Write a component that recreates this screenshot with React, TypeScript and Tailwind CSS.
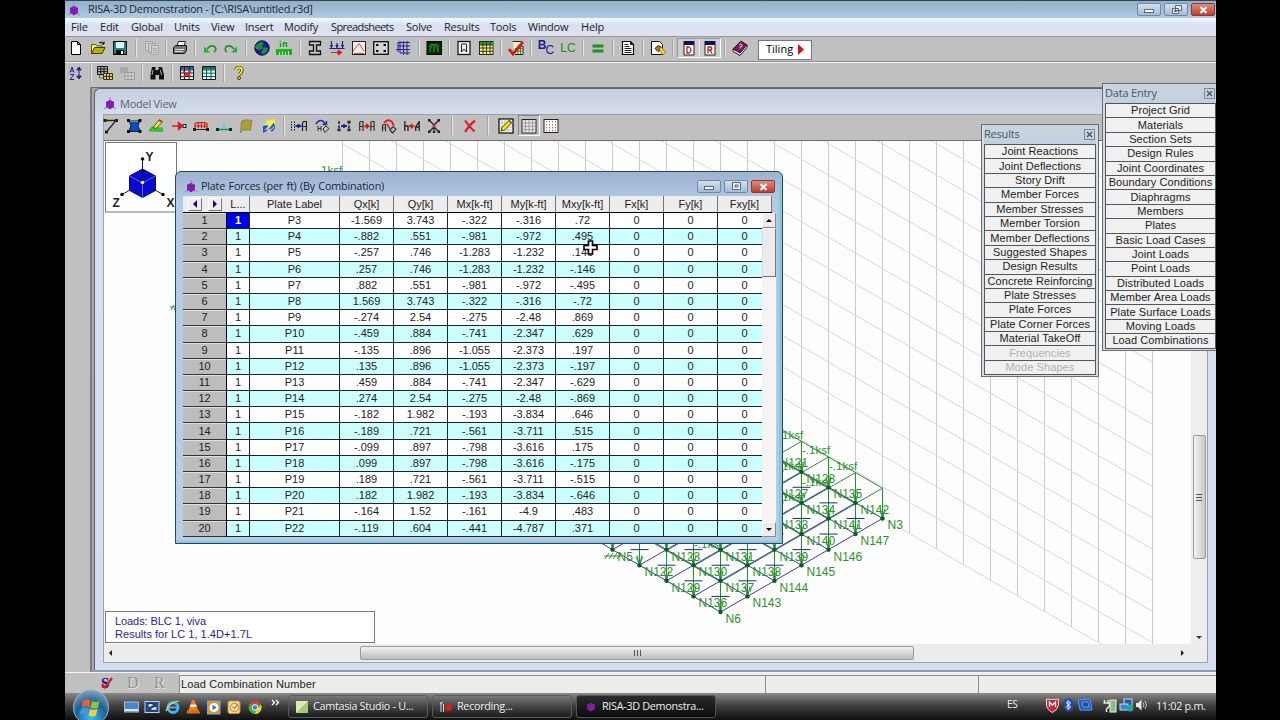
import type { ReactNode } from "react";

const UI = "font-['Open_Sans','Noto_Sans',sans-serif]";
const ARIAL = "font-['Liberation_Sans',Arial,sans-serif]";

/* ---------- icons, all on a 16x16 grid ---------- */

const ICONS: Record<string, ReactNode> = {
  new: <path d="M3.5 1.5h6l3 3v10h-9z M9.5 1.5v3h3" fill="#fff" stroke="#000" />,
  open: (
    <>
      <path d="M1.500 13.500v-9h4l1 1.500h5v2" fill="#ffff80" stroke="#5a5a00" />
      <path d="M1.500 13.500l3-6h10.500l-3 6z" fill="#b8b000" stroke="#3a3a00" />
      <path d="M9 3q3-2.500 5 1m0-2.500v2.500h-2.500" fill="none" stroke="#000" />
    </>
  ),
  save: (
    <>
      <rect x="1.500" y="1.500" width="13" height="13" fill="#118a8a" stroke="#000" />
      <rect x="4" y="2" width="8" height="6" fill="#e8f4f4" />
      <rect x="4" y="10" width="8" height="4.500" fill="#000" />
      <rect x="9" y="11" width="2" height="3" fill="#fff" />
    </>
  ),
  copyOff: (
    <g fill="#cecece" stroke="#a4a4a4">
      <rect x="1.500" y="1.500" width="7" height="9" />
      <rect x="4.500" y="3.500" width="7" height="9" />
      <path d="M7.500 5.500h7v9h-7z M9 8.500h4M9 10.500h4M9 12.500h4" />
    </g>
  ),
  print: (
    <>
      <path d="M5 6l1.500-4.500h7L12 6" fill="#fff" stroke="#222" />
      <path d="M1.500 7.500l2-2h11v5l-2 3h-11z" fill="#777" stroke="#111" />
      <path d="M3 9.500h9M3 11.500h8" stroke="#ddd" />
    </>
  ),
  undo: (
    <>
      <path d="M5 9q4-5 8-2 2 3-1 5" fill="none" stroke="#1f8f2f" strokeWidth="1.600" />
      <path d="M2 6.500v6h6z" fill="#22b040" />
    </>
  ),
  redo: (
    <>
      <path d="M11 9Q7 4 3 7q-2 3 1 5" fill="none" stroke="#1f8f2f" strokeWidth="1.600" />
      <path d="M14 6.500v6H8z" fill="#22b040" />
    </>
  ),
  globe: (
    <>
      <circle cx="8" cy="8" r="7.200" fill="#1a1a9c" stroke="#06064a" />
      <path d="M3 4l5-2.500 2 2.500-2 1 1 3-3 2-4-1-1-2z M10 7l4 1-1 4-4 2.500-2-2z" fill="#1f8a3a" />
    </>
  ),
  units: (
    <>
      <path d="M4.500 3v4M7.500 7V3h3v4M4.500 .8v1" stroke="#11a011" strokeWidth="1.400" fill="none" />
      <path d="M0 9h16v6H0z" fill="#19b219" />
      <path d="M3.500 12v3M6.500 11v4M9.500 12v3M12.500 11v4" stroke="#bfe8bf" />
    </>
  ),
  ibeam: <path d="M2.500 1.500h11v3.500h-4v6h4v3.500h-11v-3.500h4v-6h-4z" fill="#c6c6c6" stroke="#111" strokeWidth="1.300" />,
  load: (
    <>
      <path d="M2.500 1v7M8 3v5M13.500 1v7M.5 8.500h15" stroke="#20208a" strokeWidth="1.200" />
      <path d="M.8 5h3.400l-1.700 3zM6.300 5h3.400L8 8zM11.800 5h3.400l-1.700 3z" fill="#20208a" />
      <path d="M2 12.500h10M9 10l4 2.500L9 15z" stroke="#d02020" fill="#d02020" />
    </>
  ),
  spectra: (
    <>
      <rect x="1.500" y="1.500" width="13" height="13" fill="#f6eeee" stroke="#222" />
      <path d="M2 11L8 3.500l5 7.500M3 13.500h10" fill="none" stroke="#d44" />
    </>
  ),
  diaphragm: (
    <>
      <rect x=".7" y="1.700" width="14.600" height="12.600" fill="#d4d4d4" stroke="#111" strokeWidth="1.300" />
      <path d="M3 4h2.500v2H3zM10.500 4H13v2h-2.500zM3 10h2.500v2H3zM10.500 10H13v2h-2.500z" fill="#111" />
    </>
  ),
  gridBlue: <path d="M5 1v12M8.500 1v14M12 1v14M3 2.500h12M3 6h12M1 9.500h14M5 13h10M3 2v10" stroke="#25259a" fill="none" />,
  dynamics: (
    <>
      <rect x="1" y="1.500" width="14.500" height="13" fill="#062a06" stroke="#000" />
      <path d="M4 12V9l2-3M12 12V9l-2-3M8 12V5M3 7l2-2.500 3 .5 3-.5L13 7" fill="none" stroke="#2fb02f" />
    </>
  ),
  envelope: (
    <>
      <rect x="2" y="1.500" width="12" height="13" fill="#eee" stroke="#111" strokeWidth="1.200" />
      <path d="M5.500 12V4h5v8M5.500 12l2.500-3 2.500 3" fill="none" stroke="#222" />
    </>
  ),
  tableYellow: (
    <>
      <rect x="1.500" y="1.500" width="13.500" height="13" fill="#ffff66" stroke="#222" />
      <rect x="2" y="2" width="13" height="3" fill="#2fa02f" />
      <path d="M5 1.500v13M8.500 1.500v13M12 1.500v13M1.500 5h13M1.500 8h13M1.500 11.300h13" stroke="#333" />
    </>
  ),
  check: (
    <>
      <path d="M4.500 1.500h9v5h1.500v8h-8" fill="#f1f1c0" stroke="#222" />
      <path d="M7 8.500h8M7 11h8M10 7v7M12.500 7v7" stroke="#4a7a20" />
      <path d="M1 9l4 5L15 2" fill="none" stroke="#d81818" strokeWidth="2.800" />
    </>
  ),
  equals: (
    <>
      <path d="M2.500 5.500h11M2.500 10.500h11" stroke="#0c9a0c" strokeWidth="2.200" />
      <path d="M2.500 7h11M2.500 12h11" stroke="#065006" strokeWidth=".8" />
    </>
  ),
  doc: (
    <>
      <path d="M2.500 1.500h8l3 3v10h-11z" fill="#fff" stroke="#000" strokeWidth="1.200" />
      <path d="M4.500 4.500h4M4.500 6.500h5M4.500 8.500h7M4.500 10.500h7M4.500 12.500h7M10.500 2v2.500h3" stroke="#222" />
    </>
  ),
  preview: (
    <>
      <path d="M1.500 1.500h8l3 3v10h-11z" fill="#fff" stroke="#111" />
      <path d="M5 8.500l3-3 3 1.500v3l-3 1.500z" fill="#b8762c" stroke="#222" />
      <path d="M9 9l2.500-2 4 5.500-2.500 2.500z" fill="#f4e020" stroke="#7a4a10" strokeWidth=".7" />
    </>
  ),
  panelD: (
    <>
      <rect x="3" y="1.500" width="10" height="13.500" fill="#fff" stroke="#222" />
      <rect x="3" y="1" width="10" height="4" fill="#101050" />
      <path d="M6 7v6h2q2-1 2-3t-2-3z" fill="none" stroke="#d01818" strokeWidth="1.300" />
    </>
  ),
  panelR: (
    <>
      <rect x="3" y="1.500" width="10" height="13.500" fill="#fff" stroke="#222" />
      <rect x="3" y="1" width="10" height="4" fill="#101050" />
      <path d="M6 13.500V7h3q1.500 1.500 0 3H6m2 0l2.200 3.500" fill="none" stroke="#d01818" strokeWidth="1.300" />
    </>
  ),
  book: (
    <>
      <path d="M1 9l8-8 6 4-7 8z" fill="#7a1a5a" stroke="#3a0a2a" />
      <path d="M1 9l7 4 7-8v2.500L8 15.500l-7-4z" fill="#f0f0f0" stroke="#30102a" />
      <path d="M7 5q2-2 3 0t-2 2v1.500" stroke="#f0c0e0" fill="none" />
    </>
  ),
  sort: (
    <>
      <path d="M2 7.500l2-5.500 2 5.500M2.700 6h2.600M2 9.500h4l-4 5h4" fill="none" stroke="#23238f" />
      <path d="M11 3v10M8.800 5L11 2l2.200 3zM8.800 11l2.200 3 2.200-3z" stroke="#23238f" fill="#23238f" />
    </>
  ),
  gridCopy: (
    <>
      <path d="M.5 1.500h10v8H.5zM.5 4h10M.5 6.700h10M3.800 1.500v8M7 1.500v8" fill="#bbb" stroke="#111" />
      <path d="M6.500 8.500h9v6h-9zM6.500 11.500h9M9.500 8.500v6M12.500 8.500v6" fill="#d8cc50" stroke="#3a3410" />
      <path d="M2.500 10v3h3" fill="none" stroke="#7a6a00" />
    </>
  ),
  gridOff: (
    <>
      <path d="M1 2h8v6H1z" fill="#a8a8a8" />
      <path d="M6 7.500h9.500v7H6zM6 11h9.500M9 7.500v7M12.300 7.500v7" fill="#d6d6d6" stroke="#9a9a9a" />
    </>
  ),
  find: (
    <>
      <path d="M3 2h3.500v3h3V2H13l2 8v4.500h-5V10H6.500v4.500h-5V10z" fill="#111" />
      <path d="M4 5l-1 5M11.500 5l1 5" stroke="#aaa" />
    </>
  ),
  sheetDel: (
    <>
      <path d="M1.500 1.500h13v13h-13z" fill="#e8ffff" stroke="#111" />
      <rect x="2" y="2" width="12.500" height="2.500" fill="#1c6a8a" />
      <path d="M1.500 5h13M1.500 8h13M1.500 11.500h13M5.500 1.500v13M10 1.500v13" stroke="#124" />
      <path d="M4 6.500l8 5.500M12 6.500L4 12" stroke="#e01818" strokeWidth="2" />
    </>
  ),
  sheet: (
    <>
      <path d="M1.500 1.500h13v13h-13z" fill="#e8ffff" stroke="#111" />
      <rect x="2" y="2" width="12.500" height="2.500" fill="#0a7a5a" />
      <path d="M1.500 5h13M1.500 8.200h13M1.500 11.500h13M5.500 1.500v13M10 1.500v13" stroke="#0a5a5a" />
    </>
  ),
  help: (
    <>
      <path d="M5 5Q5 2.500 8 2.500t3 2.500-3 4.500" fill="none" stroke="#333" strokeWidth="3.200" />
      <path d="M5 5Q5 2.500 8 2.500t3 2.500-3 4.500" fill="none" stroke="#ffee10" strokeWidth="1.800" />
      <circle cx="8" cy="13" r="1.500" fill="#ffee10" stroke="#333" />
    </>
  ),
  member: (
    <>
      <path d="M2 2.500h11L3.500 14" fill="none" stroke="#222" strokeWidth="1.300" />
      <path d="M2 3.500h9" stroke="#b0a060" />
      <path d="M.5 1h3v3h-3zM12 1h3v3h-3zM2 12.500h3v3H2z" fill="#222" />
    </>
  ),
  plate: (
    <>
      <path d="M3 2.500h11l-2 5 2 6H3l2-6z" fill="#0a4cc8" stroke="#021" />
      <path d="M1 1h3v3H1zM12.500 1h3v3h-3zM1 12h3v3H1zM12.500 12h3v3h-3z" fill="#111" />
      <path d="M4 3h8" stroke="#d8c860" />
    </>
  ),
  modify: (
    <>
      <path d="M.5 13.500q2-6 6-5t8.500 1v4.500z" fill="#35c035" />
      <path d="M5 9.500L11.500 1.500l3 2.500L8 10.500z" fill="#f0e040" stroke="#5a5a10" />
      <path d="M11 2l3 2" stroke="#d03030" strokeWidth="2" />
    </>
  ),
  jointLoad: (
    <>
      <path d="M1 8h9M7.500 4.500L11.500 8l-4 3.500z" stroke="#e01818" fill="#e01818" strokeWidth="1.400" />
      <rect x="12" y="6.500" width="3" height="3" fill="#d8d8d8" stroke="#222" />
    </>
  ),
  distLoad: (
    <>
      <path d="M2 10V5.500l2-1h8l2 1V10M5.300 5v5M8.500 5v5M11.600 5v5M2 8h12" fill="none" stroke="#e01818" strokeWidth="1.200" />
      <path d="M1 11.500h14" stroke="#222" />
      <path d="M0 10h3v3H0zM13 10h3v3h-3z" fill="#222" />
    </>
  ),
  pointLoad: (
    <>
      <path d="M1 11.500h14" stroke="#128a8a" strokeWidth="1.500" />
      <path d="M8 4v6M6 7.500l2 2.500 2-2.500" stroke="#60c8d0" fill="none" />
      <path d="M0 10h3v3H0zM13 10h3v3h-3z" fill="#222" />
    </>
  ),
  area: <path d="M3.500 3q4-2 10.500-.500L12.500 12H5l-2.500 3z" fill="#a8a030" stroke="#8a8660" />,
  surface: (
    <>
      <path d="M5 3l8-2 2 4-5 3-6 1z" fill="#f4ec40" />
      <path d="M2 8l5-1-1 6-4 2zM13 4l1 6-3 4-3-3z" fill="#2858c8" />
      <path d="M4 12l9-8M8 13l5-4" stroke="#fff480" />
    </>
  ),
  copyA: (
    <>
      <path d="M.5 3.500v9M3.500 3.500v9" stroke="#222" strokeDasharray="1.500 1" />
      <path d="M4.500 8h6M7.500 6v4" stroke="#2424a0" strokeWidth="1.800" />
      <path d="M11.500 13V5l1-1.500h3V13M11.500 8.500h4" fill="none" stroke="#222" strokeWidth="1.200" />
    </>
  ),
  rotate: (
    <>
      <path d="M2 6q3-5 7-3l3 4M8.500 6.500h4V3" fill="none" stroke="#2a2a9a" strokeWidth="1.500" />
      <path d="M4 8v5M7 8v5M4 10.500h3M9 11l3-3 3 2.500-4 4z" stroke="#333" fill="none" />
    </>
  ),
  mirror: (
    <>
      <path d="M3 3v10M13 3v10" stroke="#222" strokeWidth="1.500" strokeDasharray="3 1.500" />
      <path d="M5 8h6M8 6v4" stroke="#2424a0" strokeWidth="1.800" />
      <path d="M1.500 12h3M11.500 12h3M11.500 4h3" stroke="#222" strokeWidth="2.500" />
    </>
  ),
  moveA: (
    <>
      <path d="M.7 13V4.500l.8-1h2.500V13M.7 8.500H4M11.800 13V4.500l.8-1h2.500V13M11.800 8.500h3.300" fill="none" stroke="#333" strokeWidth="1.200" />
      <path d="M5.200 8.200h5.400M8 5.800v4.800" stroke="#e01818" strokeWidth="2" />
    </>
  ),
  rotateRed: (
    <>
      <path d="M3 5q4-5 8-1l2 3.500" fill="none" stroke="#e01818" strokeWidth="1.800" />
      <path d="M1.500 13.500V7.500l1-1h2v7M1.500 10h3M9 12l3-3.500 3 2.500-3.500 4z" stroke="#333" fill="none" strokeWidth="1.200" />
      <path d="M6 6l3 5" stroke="#e01818" strokeWidth="1.500" />
    </>
  ),
  scaleA: (
    <>
      <path d="M.8 3v10M.8 8H4v5M15.200 3v10M15.200 9h-3.500M11.700 13V9l3.500-5.500" fill="none" stroke="#222" strokeWidth="1.300" />
      <path d="M5 8.200h5.400M7.700 5.800v4.800" stroke="#e01818" strokeWidth="2" />
    </>
  ),
  merge: (
    <>
      <path d="M3 2l5 5 5-5M3 14l5-5 5 5M8 7v6" fill="none" stroke="#222" strokeWidth="1.300" />
      <path d="M6.500 6.500h3v3h-3z" fill="#d03a3a" />
      <path d="M2 1h2.500v2.500H2zM11.500 1H14v2.500h-2.500zM2 12.500h2.500V15H2zM11.500 12.500H14V15h-2.500zM6.800 13h2.500v2H6.800z" fill="#222" />
    </>
  ),
  del: <path d="M3 2.500q4 6 9.500 11M13 2.500Q7 7 3 14" fill="none" stroke="#e01c2c" strokeWidth="2.200" />,
  edit: (
    <>
      <rect x="1" y="1" width="14" height="14" fill="#f4f4ea" stroke="#111" strokeWidth="1.300" />
      <path d="M4 1v14M7 1v14M10 1v14M1 5h14M1 9h14M1 12h14" stroke="#aaa" strokeWidth=".6" />
      <path d="M3 13l1-3.500L11 2.500l2.500 2.500L6.500 12z" fill="#f4e81c" stroke="#4a4000" />
      <path d="M11 2.500l2.500 2.500" stroke="#b03020" strokeWidth="1.500" />
    </>
  ),
  grid: (
    <>
      <rect x="1" y="1.500" width="14" height="13.500" fill="#e8e8e8" stroke="#222" />
      <path d="M4.500 2v13M8 2v13M11.500 2v13M1 5h14M1 8.300h14M1 11.600h14" stroke="#9a9a9a" />
    </>
  ),
  dots: (
    <>
      <rect x="1" y="1.500" width="14" height="13" fill="#fff" stroke="#222" />
      <path d="M3.500 3v11M6.500 3v11M9.500 3v11M12.500 3v11" stroke="#d05050" strokeDasharray="1.300 1.700" />
    </>
  ),
};

function Icon({ name, className = "w-[22px]" }: { name: string; className?: string }) {
  return (
    <span className={`flex h-full shrink-0 items-center justify-center ${className}`}>
      <svg width="16" height="16" viewBox="0 0 16 16">
        {ICONS[name]}
      </svg>
    </span>
  );
}

function Sep({ className = "w-2" }: { className?: string }) {
  return (
    <span className={`flex h-full shrink-0 justify-center py-px ${className}`}>
      <span className="w-px bg-[#a4a4a4]" />
      <span className="w-px bg-[#e6e6e6]" />
    </span>
  );
}

function RisaLogo() {
  return (
    <svg width="14" height="14" viewBox="0 0 14 14" className="shrink-0">
      <path d="M7 0v3M1 12l3-2M13 12l-3-2" stroke="#7ca0b0" strokeWidth="1.200" />
      <path d="M7 2.800l4 2.200v5l-4 2.200L3 10V5z" fill="#8e1cb8" />
      <path d="M3 5l4 2 4-2M7 7v5" stroke="#7a1aa4" fill="none" />
    </svg>
  );
}

function WindowButtons({ restore }: { restore?: boolean }) {
  const box = "flex h-[13px] w-[24px] items-center justify-center rounded-[2px] border";
  return (
    <div className="flex gap-[3px]">
      <span className={`${box} border-[#7288a6] bg-linear-to-b from-[#d4e1ef] to-[#a4bbd4]`}>
        <span className="mt-[3px] h-[4px] w-[10px] border border-[#5c6674] bg-white" />
      </span>
      <span className={`${box} border-[#7288a6] bg-linear-to-b from-[#d4e1ef] to-[#a4bbd4]`}>
        <svg width="11" height="9" viewBox="0 0 11 9">
          {restore ? (
            <path d="M4.500.5h6v5h-6zM1.500 3.500h6v5h-6zM3.500 5.500h2v1h-2z" fill="#e8eef4" stroke="#5c6674" />
          ) : (
            <path d="M1.500.5h8v7h-8zM4 3h3v2H4z" fill="#f0f4f8" stroke="#5c6674" />
          )}
        </svg>
      </span>
      <span className={`${box} border-[#8a3a34] bg-linear-to-b from-[#dd8a80] to-[#c23a2c]`}>
        <svg width="9" height="8" viewBox="0 0 9 8">
          <path d="M1.500 1l6 6M7.500 1l-6 6" stroke="#fff" strokeWidth="2" />
        </svg>
      </span>
    </div>
  );
}

/* ---------- menus and toolbars ---------- */

const MENUS = [
  ["File", "w-[29px]"],
  ["Edit", "w-[31px]"],
  ["Global", "w-[43px]"],
  ["Units", "w-[37px]"],
  ["View", "w-[34px]"],
  ["Insert", "w-[39px]"],
  ["Modify", "w-[47px]"],
  ["Spreadsheets", "w-[75px] tracking-[-0.6px]"],
  ["Solve", "w-[38px]"],
  ["Results", "w-[46px]"],
  ["Tools", "w-[38px]"],
  ["Window", "w-[53px]"],
  ["Help", "w-[40px]"],
];

function MainToolbar() {
  return (
    <div className="flex h-[25px] items-center border-b border-[#8e8e8e] bg-[#c0c0c0] pt-px pb-[3px]">
      <Icon name="new" />
      <Icon name="open" />
      <Icon name="save" />
      <Sep className="w-[10px]" />
      <Icon name="copyOff" />
      <Sep className="w-[6px]" />
      <Icon name="print" />
      <Sep />
      <Icon name="undo" />
      <Icon name="redo" className="w-[20px]" />
      <Sep className="w-[10px]" />
      <Icon name="globe" />
      <Icon name="units" />
      <Sep className="w-[9px]" />
      <Icon name="ibeam" />
      <Icon name="load" />
      <Icon name="spectra" />
      <Icon name="diaphragm" />
      <Icon name="gridBlue" />
      <Sep className="w-[9px]" />
      <Icon name="dynamics" />
      <Sep />
      <Icon name="envelope" />
      <Icon name="tableYellow" />
      <Sep />
      <Icon name="check" />
      <Sep />
      <span className={`flex w-[22px] justify-center text-[12px] leading-none text-[#1c1c90] ${ARIAL}`}>
        <b className="-mt-[2px]">B</b>
        <span className="mt-[3px] -ml-px">C</span>
      </span>
      <span className={`w-[22px] text-center text-[12px] leading-none text-[#1a8a2a] ${ARIAL}`}>LC</span>
      <Sep />
      <Icon name="equals" />
      <Sep />
      <Icon name="doc" />
      <Sep />
      <Icon name="preview" />
      <Sep />
      <span className="flex h-[20px] shrink-0 border border-t-[#999] border-r-white border-b-white border-l-[#999] bg-[#cdcdcd]">
        <Icon name="panelD" className="w-[21px]" />
        <Icon name="panelR" className="w-[21px] border-l border-[#e8e8e8]" />
      </span>
      <Sep />
      <Icon name="book" />
      <span className={`mt-[3px] ml-[7px] flex h-5 w-[54px] items-center gap-[5px] border border-[#777] bg-white pl-[7px] text-[11px] text-black ${UI}`}>
        Tiling
        <svg width="6" height="11" viewBox="0 0 6 11">
          <path d="M0 0l6 5.500L0 11z" fill="#d8101c" />
        </svg>
      </span>
    </div>
  );
}

function SheetToolbar() {
  return (
    <div className="flex h-[25px] items-center border-t border-[#f4f4f4] bg-[#c0c0c0] pb-[4px]">
      <Icon name="sort" />
      <Sep className="w-[7px]" />
      <Icon name="gridCopy" />
      <Icon name="gridOff" />
      <Sep />
      <Icon name="find" />
      <Sep />
      <Icon name="sheetDel" />
      <Icon name="sheet" />
      <Sep />
      <Icon name="help" />
    </div>
  );
}

const MODEL_TOOLS_A = ["member", "plate", "modify", "jointLoad", "distLoad", "pointLoad", "area", "surface"];
const MODEL_TOOLS_B = ["copyA", "rotate", "mirror", "moveA", "rotateRed", "scaleA", "merge"];

function ModelToolbar() {
  return (
    <div className="-ml-[4px] flex h-[25px] shrink-0 items-center pb-[4px]">
      {MODEL_TOOLS_A.map((n) => (
        <Icon key={n} name={n} className="w-[22.5px]" />
      ))}
      <Sep />
      {MODEL_TOOLS_B.map((n) => (
        <Icon key={n} name={n} className="w-[22.5px]" />
      ))}
      <Sep className="w-[13px]" />
      <Icon name="del" className="w-[23px]" />
      <Sep className="w-[13px]" />
      <Icon name="edit" className="w-[23px]" />
      <Icon name="grid" className="w-[22px] border border-t-[#888] border-r-white border-b-white border-l-[#888]" />
      <Icon name="dots" />
    </div>
  );
}

/* ---------- model drawing ---------- */

const DX = 27;
const DY = 15.59;
const LOAD = 30.3;

// Isometric node position; i runs toward the right corner, j toward the left one.
const node = (i: number, j: number) => ({ x: 720.5 + (i - j) * DX, y: 612 - (i + j) * DY });

function nodeLabel(i: number, j: number) {
  if (i === 0 && j === 0) return "N6";
  if (i === 6 && j === 0) return "N3";
  if (i === 0 && j === 4) return "N5";
  if (j === 0) return `N${142 + i}`;
  return `N${136 - (j - 1) * 7 + i}`;
}

function GridPlane() {
  const xs = Array.from({ length: 31 }, (_, k) => 342.5 + k * DX);
  const floor = (x: number) => 533.5 + (x - 909.5) * 0.5774;
  const lines = Array.from({ length: 34 }, (_, k) => k);
  return (
    <g stroke="#d9d9d9" fill="none">
      {xs.map((x) => (
        <line key={x} x1={x} x2={x} y1={130} y2={floor(x)} stroke="#cacace" />
      ))}
      {lines.map((k) => (
        <line key={k} x1={342.5} x2={1152.5} y1={floor(342.5) - k * 31.17} y2={floor(1152.5) - k * 31.17} />
      ))}
    </g>
  );
}

function Slab() {
  const cells: { i: number; j: number }[] = [];
  for (let j = 0; j <= 7; j++) for (let i = 0; i <= 6; i++) cells.push({ i, j });
  // The spreadsheet window covers everything up and left of these bounds.
  const labelled = cells.filter(({ i, j }) => node(i, j).x > 755 || node(i, j).y > 548);
  const loaded = cells.filter(({ i, j }) => i > 0 && j > 1 && (node(i, j).x > 770 || node(i, j).y > 563));
  return (
    <g>
      {cells.map(({ i, j }) => {
        const p = node(i, j);
        return (
          <g key={`b${i}-${j}`} fill="none" strokeWidth="1">
            {i < 6 && <line x1={p.x} y1={p.y} x2={p.x + DX} y2={p.y - DY} stroke="#3c3ca0" />}
            <line x1={p.x} y1={p.y} x2={p.x - DX} y2={p.y - DY} stroke="#3c3ca0" />
            {i < 6 && <line x1={p.x} y1={p.y - LOAD} x2={p.x + DX} y2={p.y - LOAD - DY} stroke="#2f8a3c" />}
            <line x1={p.x} y1={p.y - LOAD} x2={p.x - DX} y2={p.y - LOAD - DY} stroke="#2f8a3c" />
            <line x1={p.x} y1={p.y} x2={p.x} y2={p.y - LOAD} stroke="#179a1c" />
            <path d={`M${p.x - 2.5} ${p.y - 10}L${p.x} ${p.y}L${p.x + 2.5} ${p.y - 10}`} stroke="#2f8a3c" />
            {i < 6 && <line x1={p.x - 9} y1={p.y - DY} x2={p.x + 9} y2={p.y - DY} stroke="#24248c" />}
            <circle cx={p.x} cy={p.y} r="2.2" fill="#0c5a24" />
          </g>
        );
      })}
      <g fill="#2b922b" className={ARIAL}>
        {labelled.map(({ i, j }) => (
          <text key={`n${i}-${j}`} x={node(i, j).x + 5} y={node(i, j).y + 11} fontSize="12">
            {nodeLabel(i, j)}
          </text>
        ))}
        {loaded.map(({ i, j }) => (
          <text key={`l${i}-${j}`} x={node(i, j).x + 0.5} y={node(i, j).y - LOAD + 13} fontSize="11.500">
            -.1ksf
          </text>
        ))}
      </g>
      <path d="M604 556h17M605 559l4-6M609 559l4-6M613 559l4-6M617 559l4-6M636 557l3 6M643 557l-3 6" stroke="#2b922b" />
    </g>
  );
}

function AxisCube() {
  return (
    <g>
      <rect x="105.500" y="142.500" width="71" height="69.500" fill="#fff" stroke="#777" />
      <path d="M142.500 183V159M142.500 183l-20.500 11.500M142.500 183l20.500 11.500" stroke="#222" />
      <path d="M142.500 169l13 7v14.500l-13 7-13-7V176z" fill="#0a0acc" stroke="#060680" />
      <path d="M129.500 176l13 7 13-7M142.500 183v14.500" stroke="#5a6ae8" fill="none" />
      <path d="M142.500 182v-23" stroke="#111" />
      <circle cx="142.500" cy="182.500" r="1.800" fill="#ffee20" />
      <circle cx="142.500" cy="159" r="1.800" fill="#111" />
      <circle cx="122" cy="194.500" r="1.800" fill="#111" />
      <circle cx="163" cy="194.500" r="1.800" fill="#111" />
      <g className={ARIAL} fontSize="12" fontWeight="bold" fill="#222">
        <text x="145.500" y="161">Y</text>
        <text x="112.500" y="207">Z</text>
        <text x="166.500" y="207">X</text>
      </g>
    </g>
  );
}

function ModelCanvas() {
  return (
    <svg width="1087" height="503" viewBox="104 141 1087 503" className="shrink-0 bg-[#fdfdfd]">
      <GridPlane />
      <Slab />
      <g fill="#2b922b" fontSize="11.500" className={ARIAL}>
        <text x="314" y="174">-.1ksf</text>
        <path d="M170 307h8M171 310l3-5M174 310l3-5" stroke="#2b922b" />
      </g>
      <AxisCube />
      <rect x="105.500" y="611.500" width="269" height="31" fill="#fff" stroke="#777" />
      <g fill="#26268c" fontSize="11" className={ARIAL}>
        <text x="115" y="625" textLength="91">Loads: BLC 1, viva</text>
        <text x="115" y="638" textLength="137">Results for LC 1, 1.4D+1.7L</text>
      </g>
    </svg>
  );
}

function ModelWindow() {
  return (
    <div className="ml-[2px] flex flex-1 flex-col rounded-tl-[6px] border-t border-l border-[#5a6272] bg-linear-to-b from-[#c6cde0] via-[#d6e0ee] via-[5%] to-[#d5def0]">
      <div className={`flex h-[25px] shrink-0 items-center gap-[3px] pt-[5px] pl-[8px] text-[11px] tracking-[-0.25px] text-[#5c646e] ${UI}`}>
        <RisaLogo />
        <span>Model View</span>
      </div>
      <div className="mr-[8px] ml-[8px] flex h-[549px] flex-col border border-[#9aa2ae] bg-[#c0c0c0]">
        <ModelToolbar />
        <div className="flex border-t border-[#6e6e6e]">
          <ModelCanvas />
          <div className="flex flex-1 flex-col items-center bg-[#eeeeee]">
            <div className="mt-[294px] flex h-[124px] w-[13px] flex-col items-center justify-center gap-[2px] rounded-[2px] border border-[#9a9a9a] bg-linear-to-r from-[#f4f4f4] to-[#c8c8c8]">
              <span className="h-px w-[6px] bg-[#555]" />
              <span className="h-px w-[6px] bg-[#555]" />
              <span className="h-px w-[6px] bg-[#555]" />
            </div>
            <span className="mt-[77px] border-x-[3px] border-t-[3px] border-x-transparent border-t-[#333]" />
          </div>
        </div>
        <div className="flex h-[18px] items-center bg-[#ececec]">
          <span className="ml-[5px] border-y-[3px] border-r-[3px] border-y-transparent border-r-[#222]" />
          <div className="ml-[248px] flex h-[14px] w-[554px] items-center justify-center gap-[2px] rounded-[2px] border border-[#9a9a9a] bg-linear-to-b from-[#f0f0f0] to-[#bdbdbd]">
            <span className="h-[6px] w-px bg-[#555]" />
            <span className="h-[6px] w-px bg-[#555]" />
            <span className="h-[6px] w-px bg-[#555]" />
          </div>
          <span className="ml-[267px] border-y-[3px] border-l-[3px] border-y-transparent border-l-[#222]" />
        </div>
      </div>
    </div>
  );
}

/* ---------- plate forces spreadsheet ---------- */

const COLUMNS = ["L...", "Plate Label", "Qx[k]", "Qy[k]", "Mx[k-ft]", "My[k-ft]", "Mxy[k-ft]", "Fx[k]", "Fy[k]", "Fxy[k]"];

const ROWS = [
  ["P3", "-1.569", "3.743", "-.322", "-.316", ".72"],
  ["P4", "-.882", ".551", "-.981", "-.972", ".495"],
  ["P5", "-.257", ".746", "-1.283", "-1.232", ".146"],
  ["P6", ".257", ".746", "-1.283", "-1.232", "-.146"],
  ["P7", ".882", ".551", "-.981", "-.972", "-.495"],
  ["P8", "1.569", "3.743", "-.322", "-.316", "-.72"],
  ["P9", "-.274", "2.54", "-.275", "-2.48", ".869"],
  ["P10", "-.459", ".884", "-.741", "-2.347", ".629"],
  ["P11", "-.135", ".896", "-1.055", "-2.373", ".197"],
  ["P12", ".135", ".896", "-1.055", "-2.373", "-.197"],
  ["P13", ".459", ".884", "-.741", "-2.347", "-.629"],
  ["P14", ".274", "2.54", "-.275", "-2.48", "-.869"],
  ["P15", "-.182", "1.982", "-.193", "-3.834", ".646"],
  ["P16", "-.189", ".721", "-.561", "-3.711", ".515"],
  ["P17", "-.099", ".897", "-.798", "-3.616", ".175"],
  ["P18", ".099", ".897", "-.798", "-3.616", "-.175"],
  ["P19", ".189", ".721", "-.561", "-3.711", "-.515"],
  ["P20", ".182", "1.982", "-.193", "-3.834", "-.646"],
  ["P21", "-.164", "1.52", "-.161", "-4.9", ".483"],
  ["P22", "-.119", ".604", "-.441", "-4.787", ".371"],
];

function ScrollArrow({ up }: { up?: boolean }) {
  return (
    <span className="flex h-[15px] w-full items-center justify-center border border-t-white border-r-[#888] border-b-[#888] border-l-white bg-[#ececec]">
      <span
        className={
          up
            ? "border-x-[3px] border-b-[3px] border-x-transparent border-b-black"
            : "border-x-[3px] border-t-[3px] border-x-transparent border-t-black"
        }
      />
    </span>
  );
}

function PlateForces() {
  return (
    <div className="absolute top-[171px] left-[175px] flex h-[373px] w-[608px] flex-col rounded-t-[6px] border border-[#1d4a64] bg-linear-to-b from-[#9fb2cf] via-[#b2cbe6] via-[8%] to-[#b4cfe6] shadow-[inset_-3px_-2px_2px_#8cc4dc]">
      <div className="flex h-[24px] shrink-0 items-center justify-between pt-[5px] pr-[7px] pl-[8px]">
        <div className={`flex items-center gap-[3px] text-[10.800px] text-[#1c2430] ${UI}`}>
          <RisaLogo />
          <span className="tracking-[-0.2px] [word-spacing:0.8px]">Plate Forces (per ft) (By Combination)</span>
        </div>
        <WindowButtons />
      </div>
      <div className={`ml-[7px] w-[593px] text-[11px] leading-none text-[#222] ${ARIAL}`}>
        <div className="grid h-[17px] w-[589px] grid-cols-[44px_23px_90px_repeat(7,54px)_54px] border-b border-black bg-[#ededed]">
          <div className="flex items-center gap-[6px] pl-[5px]">
            <span className="flex h-[13px] w-[14px] items-center justify-center border border-t-white border-r-[#777] border-b-[#777] border-l-white">
              <span className="border-y-[4px] border-r-[4px] border-y-transparent border-r-[#10107c]" />
            </span>
            <span className="flex h-[13px] w-[14px] items-center justify-center border border-t-white border-r-[#777] border-b-[#777] border-l-white">
              <span className="border-y-[4px] border-l-[4px] border-y-transparent border-l-[#10107c]" />
            </span>
          </div>
          {COLUMNS.map((c) => (
            <div key={c} className="flex items-center justify-center border-r border-[#777]">
              {c}
            </div>
          ))}
        </div>
        <div className="flex">
          <div className="w-[579px]">
            {ROWS.map((row, n) => (
              <div
                key={row[0]}
                className={`grid h-[16.2px] grid-cols-[44px_23px_90px_repeat(7,54px)_54px] overflow-hidden ${n % 2 ? "bg-[#ccffff]" : "bg-white"}`}
              >
                <div className="flex items-center justify-center border-r border-b border-r-black border-b-[#333] bg-[#bdbdbd] shadow-[inset_0_1px_0_#e0e0e0]">
                  {n + 1}
                </div>
                <div
                  className={`flex items-center justify-center border-r border-b border-[#222] ${n === 0 ? "bg-[#0000f0] font-bold text-white" : ""}`}
                >
                  1
                </div>
                {[...row, "0", "0", "0"].map((v, k) => (
                  <div key={k} className="flex items-center justify-center border-r border-b border-[#222]">
                    {v}
                  </div>
                ))}
              </div>
            ))}
          </div>
          <div className="flex w-[14px] flex-col justify-between bg-[#f4f4f4]">
            <div>
              <ScrollArrow up />
              <div className="h-[49px] border border-t-white border-r-[#777] border-b-[#777] border-l-[#ddd] bg-[#ebebeb]" />
            </div>
            <ScrollArrow />
          </div>
        </div>
      </div>
    </div>
  );
}

/* ---------- floating button lists ---------- */

const RESULTS = [
  "Joint Reactions",
  "Joint Deflections",
  "Story Drift",
  "Member Forces",
  "Member Stresses",
  "Member Torsion",
  "Member Deflections",
  "Suggested Shapes",
  "Design Results",
  "Concrete Reinforcing",
  "Plate Stresses",
  "Plate Forces",
  "Plate Corner Forces",
  "Material TakeOff",
  "Frequencies",
  "Mode Shapes",
];

const DATA_ENTRY = [
  "Project Grid",
  "Materials",
  "Section Sets",
  "Design Rules",
  "Joint Coordinates",
  "Boundary Conditions",
  "Diaphragms",
  "Members",
  "Plates",
  "Basic Load Cases",
  "Joint Loads",
  "Point Loads",
  "Distributed Loads",
  "Member Area Loads",
  "Plate Surface Loads",
  "Moving Loads",
  "Load Combinations",
];

function Palette({ title, items, disabled = [], className }: { title: string; items: string[]; disabled?: string[]; className: string }) {
  return (
    <div className={`absolute flex flex-col border border-[#666d75] bg-[#d3dce6] px-[2px] pb-[2px] ${className}`}>
      <div className={`flex h-[19px] shrink-0 items-center justify-between bg-linear-to-b from-[#cbd4dc] to-[#bfd0e0] pr-px text-[11px] tracking-[-0.2px] text-[#4c5864] ${UI}`}>
        {title}
        <span className="flex size-[11px] items-center justify-center border border-[#7c8a9a]">
          <svg width="7" height="7" viewBox="0 0 7 7">
            <path d="M1 1l5 5M6 1L1 6" stroke="#46505c" strokeWidth="1.300" />
          </svg>
        </span>
      </div>
      <div className={`border-x border-t border-[#555] text-[11px] tracking-[0.08px] text-[#1c1c1c] ${ARIAL}`}>
        {items.map((t) => (
          <div
            key={t}
            className={`flex h-[14.4px] items-center justify-center border-b border-[#555] bg-[#f0f0f0] leading-none whitespace-nowrap ${disabled.includes(t) ? "text-[#b0b0b0]" : ""}`}
          >
            {t}
          </div>
        ))}
      </div>
    </div>
  );
}

/* ---------- status bar and taskbar ---------- */

function StatusBar() {
  return (
    <div className={`flex h-[21px] items-stretch border-t border-[#f4f4f4] bg-[#ededeb] text-[11px] text-[#222] ${ARIAL}`}>
      <div className="flex w-[114px] items-center bg-[#c0c0c0] pl-[34px] font-['Liberation_Serif',serif] text-[16px] leading-none">
        <span className="relative w-[28px] pl-[2px] text-[15px] font-bold text-[#1414a0]">
          S
          <svg width="13" height="13" viewBox="0 0 13 13" className="absolute top-px left-[2px]">
            <path d="M1 7l3 3.500L11 1" fill="none" stroke="#e01818" strokeWidth="2.200" />
          </svg>
        </span>
        <span className="w-[27px] text-[#949494] [text-shadow:1px_1px_0_#e8e8e8]">D</span>
        <span className="text-[#949494] [text-shadow:1px_1px_0_#e8e8e8]">R</span>
      </div>
      <div className="mt-[2px] flex w-[586px] items-center border-t border-l border-[#8c8c8c] pl-px tracking-[0.15px]">
        Load Combination Number
      </div>
      <div className="mt-[2px] w-[213px] border-t border-l border-[#8c8c8c]" />
      <div className="mt-[2px] flex-1 border-t border-l border-[#8c8c8c]" />
    </div>
  );
}

function QuickLaunch() {
  return (
    <svg width="162" height="20" viewBox="0 0 162 20" className="shrink-0">
      <rect x="1.500" y="5" width="14" height="10" fill="#4a86cc" stroke="#a8bccc" />
      <path d="M2 13h13" stroke="#dde8f0" strokeWidth="2" />
      <rect x="22" y="4.500" width="14" height="11" fill="#1c4a88" stroke="#c0d0e0" />
      <path d="M25 6.500h5v4h-5zM28 9.500h6v4h-6z" fill="#c8dcf4" stroke="#1c3a68" />
      <circle cx="50" cy="10.500" r="5" fill="none" stroke="#4ab0f0" strokeWidth="3" />
      <path d="M46 10.500h9" stroke="#4ab0f0" strokeWidth="2" />
      <path d="M43 14q3-9 13-10" fill="none" stroke="#f0d050" strokeWidth="1.200" />
      <path d="M69 3h2.500l3.500 10h-9.500z" fill="#f08020" />
      <path d="M67.500 7.500h5.500l.8 2.500h-7z" fill="#f8f0e8" />
      <path d="M64.500 13h11.500l1 3.500h-13.500z" fill="#e06c10" />
      <rect x="84.500" y="4" width="12.500" height="13" fill="#f08c20" stroke="#58b8e8" />
      <circle cx="91" cy="10.500" r="4.500" fill="#fff" />
      <path d="M89.500 8l4 2.500-4 2.500z" fill="#1c6ab8" />
      <rect x="105" y="4" width="12" height="12.500" rx="2" fill="#f4d8a0" stroke="#c8923c" />
      <circle cx="111.500" cy="10.500" r="4" fill="#fff8e8" stroke="#d8982c" strokeWidth="1.500" />
      <path d="M109.500 9.500l2 2 3-4" fill="none" stroke="#c87c1c" strokeWidth="1.300" />
      <circle cx="132" cy="10.500" r="6.500" fill="#3cae48" />
      <path d="M126.200 7.500a6.500 6.500 0 0 1 11.600 0h-5.800z" fill="#e03c30" />
      <path d="M138 8a6.500 6.500 0 0 1-6.500 9l3.500-6z" fill="#f4cc28" />
      <circle cx="132" cy="10.500" r="2.800" fill="#3c80e0" stroke="#fff" />
      <path d="M149 3l2.500 2.500L149 8M153 3l2.500 2.500L153 8" fill="none" stroke="#fff" strokeWidth="1.300" />
    </svg>
  );
}

function StartOrb() {
  return (
    <svg width="38" height="31" viewBox="0 0 38 31" className="-mt-[4px] ml-[7px] shrink-0 self-start">
      <defs>
        <radialGradient id="orb" cx="50%" cy="80%" r="75%">
          <stop offset="0" stopColor="#3cc0f0" />
          <stop offset=".6" stopColor="#1c5f94" />
          <stop offset="1" stopColor="#7c9cb4" />
        </radialGradient>
      </defs>
      <circle cx="19" cy="18.500" r="17.500" fill="url(#orb)" stroke="#9cb4c4" />
      <path d="M11 12q4-2.500 7.500-.5L17 18q-3.500-1.500-7.500.500z" fill="#e8602c" />
      <path d="M20 12q4 2 7.500 0L26 18.500q-3.500 2-7.500-.300z" fill="#8cc43c" />
      <path d="M9 20q4-2.500 7.500-.5L15 25.500q-3.500-1.500-7.500.500z" fill="#3c98e0" />
      <path d="M18 20q4 2 7.500 0L24 26.500q-3.500 2-7.500-.300z" fill="#f8cc3c" />
    </svg>
  );
}

function Tray() {
  return (
    <svg width="102" height="18" viewBox="0 0 102 18" className="-mt-[4px] shrink-0">
      <path d="M.5 3q6 1 12 0v6q-1 5-6 7.500Q1 14 .5 9z" fill="#c8283c" stroke="#f0d8dc" />
      <path d="M3.500 11V6l3 3 3-3v5" fill="none" stroke="#fff" strokeWidth="1.300" />
      <rect x="18" y="2.500" width="9" height="13" rx="4.500" fill="#1c4cb0" />
      <path d="M20 6l4.500 5-2.500 2.500v-9L24.500 7 20 11.500" fill="none" stroke="#fff" />
      <path d="M32 4l12-1 2 11H34z" fill="#1c5cc8" stroke="#5c98e8" />
      <path d="M36 6h6l1 5h-6z" fill="#2848a0" stroke="#88b8f0" strokeWidth=".7" />
      <path d="M58.500 4v3M62 4v3M57.500 7h6v3l-3 3v3" fill="none" stroke="#e0ece0" strokeWidth="1.500" />
      <rect x="64" y="4" width="6" height="12" fill="#8cb88c" stroke="#e8f4e8" />
      <rect x="78" y="3" width="8" height="7" fill="#2858a8" stroke="#c8dcf0" />
      <rect x="74" y="8" width="8" height="6" fill="#3c88d0" stroke="#c8dcf0" />
      <circle cx="84" cy="12" r="3.500" fill="#20a8a0" />
      <path d="M90 7h2l3.500-3.500v11L92 11h-2z" fill="#e8e8e8" />
      <path d="M97 6.500q2 2.500 0 5M99 5q3 4 0 8" fill="none" stroke="#c8c8c8" />
    </svg>
  );
}

function TaskButton({ label, icon, active }: { label: string; icon: ReactNode; active?: boolean }) {
  return (
    <div
      className={`mr-[4px] flex h-[23px] w-[140px] shrink-0 items-center rounded-[3px] border ${
        active
          ? "gap-[6px] border-[#555] bg-linear-to-b from-[#2c2c2c] to-[#0c0c0c] pl-[9px]"
          : "gap-[4px] border-[#5c5c5c] bg-linear-to-b from-[#787878] via-[#454545] to-[#1c1c1c] pl-[6px]"
      }`}
    >
      {icon}
      <span className="whitespace-nowrap">{label}</span>
    </div>
  );
}

function Taskbar() {
  return (
    <div className={`flex h-[27px] items-center bg-linear-to-b from-[#8a8a8a] via-[#3c3c3c] via-[50%] to-[#101010] text-[10.800px] tracking-[-0.3px] text-[#f0f0f0] ${UI}`}>
      <StartOrb />
      <span className="ml-[13px] flex">
        <QuickLaunch />
      </span>
      <div className="ml-[3px] flex">
        <TaskButton
          label="Camtasia Studio - U..."
          icon={
            <svg width="14" height="14" viewBox="0 0 14 14">
              <path d="M1 1h12v12H1z" fill="#a8c878" />
              <path d="M1 1h12L1 13z" fill="#dce8b8" />
            </svg>
          }
        />
        <TaskButton
          label="Recording..."
          icon={
            <svg width="14" height="14" viewBox="0 0 14 14">
              <path d="M2 2v10M4.500 4v8M1 4l3-2" stroke="#d8d8d8" fill="none" />
              <circle cx="9.500" cy="7.500" r="3.500" fill="#d81c1c" />
            </svg>
          }
        />
        <TaskButton
          active
          label="RISA-3D Demonstra..."
          icon={
            <svg width="10" height="10" viewBox="0 0 10 10">
              <path d="M5 .5l4 2.300v4.500L5 9.500 1 7.300V2.800z" fill="#7c1ca8" />
            </svg>
          }
        />
      </div>
      <span className="-mt-[4px] ml-[287px] w-[39px] text-[10px]">ES</span>
      <Tray />
      <span className="ml-[8px] whitespace-nowrap">11:02 p.m.</span>
    </div>
  );
}

export default function App() {
  return (
    <div className="relative h-[720px] w-[1280px] overflow-hidden bg-black">
      <div className="ml-[65px] flex h-full w-[1151px] flex-col overflow-hidden bg-[#c0c0c0]">
        <div className="flex h-[18px] items-center justify-between border-t border-[#2c4a5c] bg-linear-to-b from-[#94aec6] to-[#b0cae4] pr-px pl-[2px]">
          <div className={`flex items-center gap-[7px] text-[11px] tracking-[-0.3px] text-[#1c2834] ${UI}`}>
            <RisaLogo />
            <span>RISA-3D Demonstration - [C:\RISA\untitled.r3d]</span>
          </div>
          <WindowButtons restore />
        </div>
        <div className={`flex h-[19px] items-center border-b border-[#9098a4] bg-linear-to-b from-[#f6f9fd] via-[#d6e0f0] via-[40%] to-[#e2e2f0] pl-[6px] text-[11px] tracking-[-0.2px] text-[#1c1c24] ${UI}`}>
          {MENUS.map(([label, w]) => (
            <span key={label} className={w}>
              {label}
            </span>
          ))}
        </div>
        <MainToolbar />
        <SheetToolbar />
        <div className="ml-[25px] flex h-[585px] shrink-0 border-t border-b-2 border-l-2 border-t-[#6c6c74] border-b-[#8c9ab0] border-l-[#7c7c7c] bg-[#a8a8a8]">
          <ModelWindow />
        </div>
        <StatusBar />
        <Taskbar />
      </div>

      <Palette
        title="Results"
        items={RESULTS}
        disabled={["Frequencies", "Mode Shapes"]}
        className="top-[124px] left-[981px] h-[253px] w-[118px]"
      />
      <div className="absolute top-[83px] left-[1102px] h-[268px] w-[114px] overflow-hidden">
        <Palette title="Data Entry" items={DATA_ENTRY} className="top-0 left-0 h-[268px] w-[117px]" />
      </div>
      <PlateForces />

      <svg width="15" height="16" viewBox="0 0 15 16" className="absolute top-[240px] left-[583px]">
        <path d="M5.500 1h4v4.500H14v4H9.500V14h-4V9.500H1v-4h4.500z" fill="#fff" stroke="#000" strokeWidth="1.600" />
      </svg>
    </div>
  );
}
